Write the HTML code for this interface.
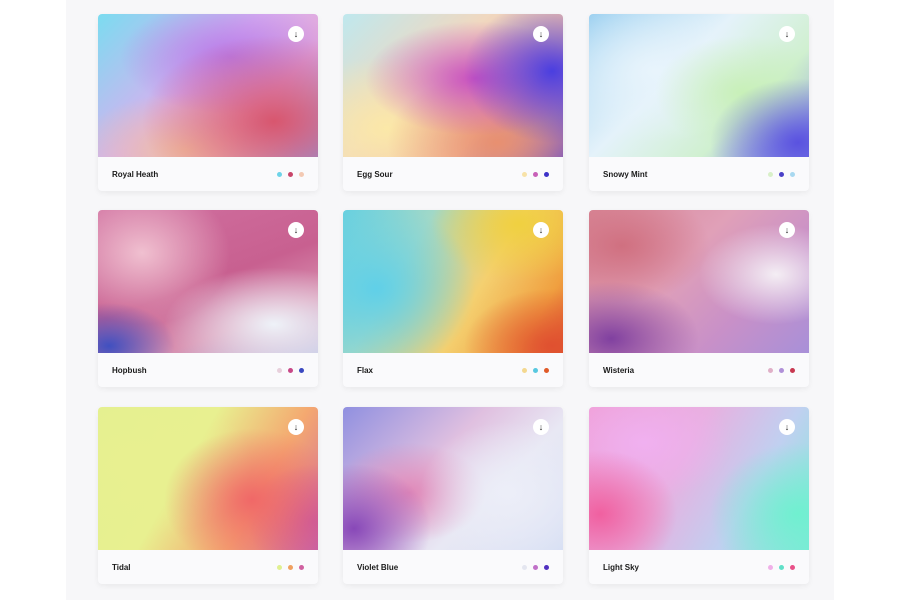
<!DOCTYPE html>
<html><head><meta charset="utf-8"><style>
*{margin:0;padding:0;box-sizing:border-box}
body{width:900px;height:600px;background:#fff;position:relative;overflow:hidden;font-family:"Liberation Sans",sans-serif}
.panel{position:absolute;left:66px;top:0;width:768px;height:600px;background:#f7f7f9}
.card{position:absolute;width:220px;height:177px;border-radius:4px;background:#fafafc;box-shadow:0 2px 6px rgba(0,0,0,.06);overflow:hidden}
.img{position:absolute;left:0;top:0;width:220px;height:143px}
.btn{position:absolute;right:14px;top:12px;width:16px;height:16px;border-radius:50%;background:#fff;font-size:9px;line-height:16px;text-align:center;color:#222;font-weight:bold}
.name{position:absolute;left:14px;top:156px;font-size:8px;font-weight:bold;color:#1a1a1a}
.dots{position:absolute;right:14px;top:158px;display:flex;gap:6px}
.dots i{display:block;width:5px;height:5px;border-radius:50%}
</style></head><body>
<div class="panel"></div>

<div class="card" style="left:98px;top:14px"><div class="img" style="background:radial-gradient(ellipse 60% 60% at 80% 75%,#d8566e 0%,rgba(216,86,110,0) 100%),radial-gradient(ellipse 50% 40% at 60% 30%,#b77ae8 0%,rgba(183,122,232,0) 100%),radial-gradient(ellipse 50% 40% at 40% 95%,#f0c0a0 0%,rgba(240,192,160,0) 100%),linear-gradient(135deg,#7bdcf0 0%,#d7b0f0 45%,#e4a8d8 70%,#8aa0e8 100%)"></div><div class="btn">↓</div><div class="name">Royal Heath</div><div class="dots"><i style="background:#6dd3e8"></i><i style="background:#c8456a"></i><i style="background:#f3c9b3"></i></div></div>

<div class="card" style="left:343px;top:14px"><div class="img" style="background:radial-gradient(ellipse 40% 50% at 95% 40%,#4a3ee0 0%,rgba(74,62,224,0) 100%),radial-gradient(ellipse 50% 40% at 60% 45%,#c850c0 0%,rgba(200,80,192,0) 100%),radial-gradient(ellipse 50% 50% at 70% 90%,#e89070 0%,rgba(232,144,112,0) 100%),radial-gradient(ellipse 50% 50% at 20% 80%,#fbe8a8 0%,rgba(251,232,168,0) 100%),linear-gradient(135deg,#bfe8ee 0%,#f0d8c0 40%,#f4b8a0 70%,#5d48d8 100%)"></div><div class="btn">↓</div><div class="name">Egg Sour</div><div class="dots"><i style="background:#f7e2a8"></i><i style="background:#c860b8"></i><i style="background:#3d32c8"></i></div></div>

<div class="card" style="left:589px;top:14px"><div class="img" style="background:radial-gradient(ellipse 40% 45% at 95% 90%,#5a52e0 0%,rgba(90,82,224,0) 100%),radial-gradient(ellipse 40% 40% at 70% 55%,#c8f0b8 0%,rgba(200,240,184,0) 100%),radial-gradient(ellipse 50% 50% at 30% 40%,#e8f4fc 0%,rgba(232,244,252,0) 100%),linear-gradient(135deg,#9cd0f0 0%,#e4f2fa 40%,#d0f0d0 70%,#8890e8 100%)"></div><div class="btn">↓</div><div class="name">Snowy Mint</div><div class="dots"><i style="background:#d8f0c8"></i><i style="background:#4a40c8"></i><i style="background:#a8d8f0"></i></div></div>

<div class="card" style="left:98px;top:210px"><div class="img" style="background:radial-gradient(ellipse 50% 40% at 80% 80%,#eef2f8 0%,rgba(238,242,248,0) 100%),radial-gradient(ellipse 30% 30% at 5% 95%,#4050c0 0%,rgba(64,80,192,0) 100%),radial-gradient(ellipse 40% 50% at 20% 30%,#f0c0d0 0%,rgba(240,192,208,0) 100%),linear-gradient(160deg,#d070a0 0%,#c86090 50%,#d890b0 75%,#c0c0e0 100%)"></div><div class="btn">↓</div><div class="name">Hopbush</div><div class="dots"><i style="background:#e8d0dc"></i><i style="background:#c84888"></i><i style="background:#3a48c0"></i></div></div>

<div class="card" style="left:343px;top:210px"><div class="img" style="background:radial-gradient(ellipse 40% 40% at 95% 95%,#e05030 0%,rgba(224,80,48,0) 100%),radial-gradient(ellipse 45% 60% at 15% 55%,#60d0e8 0%,rgba(96,208,232,0) 100%),radial-gradient(ellipse 40% 40% at 80% 10%,#f0d040 0%,rgba(240,208,64,0) 100%),linear-gradient(120deg,#68d0e0 0%,#a0d8c8 30%,#f4d070 60%,#f0a040 85%,#e06030 100%)"></div><div class="btn">↓</div><div class="name">Flax</div><div class="dots"><i style="background:#f4d890"></i><i style="background:#58c8e0"></i><i style="background:#e05a28"></i></div></div>

<div class="card" style="left:589px;top:210px"><div class="img" style="background:radial-gradient(ellipse 35% 35% at 85% 45%,#f4eef4 0%,rgba(244,238,244,0) 100%),radial-gradient(ellipse 40% 40% at 10% 90%,#8040a0 0%,rgba(128,64,160,0) 100%),radial-gradient(ellipse 40% 40% at 15% 25%,#d07080 0%,rgba(208,112,128,0) 100%),linear-gradient(135deg,#d88898 0%,#e0a0b8 40%,#c890c8 70%,#a890d8 100%)"></div><div class="btn">↓</div><div class="name">Wisteria</div><div class="dots"><i style="background:#e0b0c8"></i><i style="background:#b090d8"></i><i style="background:#c83850"></i></div></div>

<div class="card" style="left:98px;top:407px"><div class="img" style="background:radial-gradient(ellipse 40% 50% at 70% 65%,#f06868 0%,rgba(240,104,104,0) 100%),radial-gradient(ellipse 30% 40% at 98% 80%,#c858a0 0%,rgba(200,88,160,0) 100%),radial-gradient(ellipse 50% 50% at 20% 40%,#e8f090 0%,rgba(232,240,144,0) 100%),linear-gradient(120deg,#e4f090 0%,#e8f090 40%,#f4a870 70%,#d068a0 100%)"></div><div class="btn">↓</div><div class="name">Tidal</div><div class="dots"><i style="background:#e0f090"></i><i style="background:#f0a060"></i><i style="background:#d060a0"></i></div></div>

<div class="card" style="left:343px;top:407px"><div class="img" style="background:radial-gradient(ellipse 40% 50% at 75% 60%,#eceef8 0%,rgba(236,238,248,0) 100%),radial-gradient(ellipse 35% 45% at 5% 85%,#8848b8 0%,rgba(136,72,184,0) 100%),radial-gradient(ellipse 35% 35% at 30% 60%,#e088b8 0%,rgba(224,136,184,0) 100%),linear-gradient(135deg,#9090e0 0%,#e0c0e0 40%,#e8e8f4 65%,#d8e0f4 100%)"></div><div class="btn">↓</div><div class="name">Violet Blue</div><div class="dots"><i style="background:#e4e6f0"></i><i style="background:#c070c8"></i><i style="background:#5030c0"></i></div></div>

<div class="card" style="left:589px;top:407px"><div class="img" style="background:radial-gradient(ellipse 40% 50% at 95% 75%,#70f0d0 0%,rgba(112,240,208,0) 100%),radial-gradient(ellipse 35% 45% at 5% 75%,#f060a0 0%,rgba(240,96,160,0) 100%),radial-gradient(ellipse 40% 40% at 25% 25%,#f0b0f0 0%,rgba(240,176,240,0) 100%),linear-gradient(120deg,#f0a0d8 0%,#e8b0e0 40%,#c0d0f0 70%,#80e8d8 100%)"></div><div class="btn">↓</div><div class="name">Light Sky</div><div class="dots"><i style="background:#f0b0e8"></i><i style="background:#60e0c8"></i><i style="background:#e85088"></i></div></div>

</body></html>
